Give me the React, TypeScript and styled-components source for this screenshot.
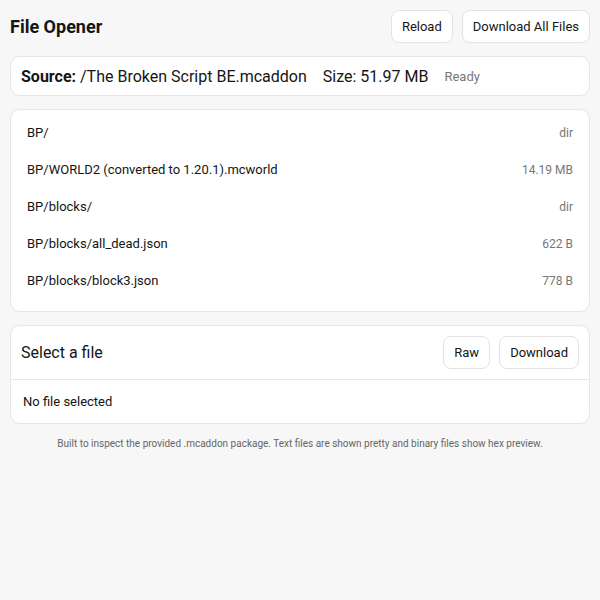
import React from "react";
import styled, { createGlobalStyle } from "styled-components";

interface Entry {
  name: string;
  size: string;
}

const entries: Entry[] = [
  { name: "BP/", size: "dir" },
  { name: "BP/WORLD2 (converted to 1.20.1).mcworld", size: "14.19 MB" },
  { name: "BP/blocks/", size: "dir" },
  { name: "BP/blocks/all_dead.json", size: "622 B" },
  { name: "BP/blocks/block3.json", size: "778 B" },
];

const GlobalStyle = createGlobalStyle`
  body {
    margin: 0;
    background: #f7f7f7;
    font-family: Roboto, "Liberation Sans", sans-serif;
    color: #151515;
  }
`;

const Page = styled.div`
  padding: 10px;
  display: flex;
  flex-direction: column;
  gap: 13px;
`;

const Header = styled.header`
  display: flex;
  align-items: center;
  justify-content: space-between;
  height: 33px;
`;

const Title = styled.h1`
  margin: 0;
  font-size: 18px;
  font-weight: 700;
`;

const Actions = styled.div`
  display: flex;
  gap: 9px;
`;

const Button = styled.button`
  height: 33px;
  padding: 0 10px;
  border: 1px solid #e2e2e2;
  border-radius: 8px;
  background: #fff;
  font-family: inherit;
  font-size: 13px;
  color: #151515;
  cursor: pointer;
`;

const Card = styled.section`
  background: #fff;
  border: 1px solid #e6e6e6;
  border-radius: 10px;
`;

const SourceBar = styled(Card)`
  height: 38px;
  padding: 0 10px;
  display: flex;
  align-items: center;
  gap: 16px;
  font-size: 16px;
`;

const Label = styled.b`
  font-weight: 700;
`;

const Status = styled.span`
  font-size: 13px;
  color: #777;
`;

const FileList = styled(Card)`
  padding: 4px 16px 12px;
`;

const Row = styled.div`
  height: 37px;
  display: flex;
  align-items: center;
  justify-content: space-between;
  font-size: 13px;
`;

const Size = styled.span`
  font-size: 12px;
  color: #777;
`;

const Viewer = styled(Card)``;

const ViewerHead = styled.div`
  height: 53px;
  padding: 0 10px;
  display: flex;
  align-items: center;
  justify-content: space-between;
  border-bottom: 1px solid #e6e6e6;
`;

const ViewerTitle = styled.span`
  font-size: 16px;
`;

const ViewerBody = styled.div`
  height: 43px;
  padding: 0 12px;
  display: flex;
  align-items: center;
  font-size: 13px;
`;

const Footer = styled.p`
  margin: 1px 0 0;
  text-align: center;
  font-size: 10px;
  color: #666;
`;

export default function App() {
  return (
    <>
      <GlobalStyle />
      <Page>
        <Header>
          <Title>File Opener</Title>
          <Actions>
            <Button>Reload</Button>
            <Button>Download All Files</Button>
          </Actions>
        </Header>
        <SourceBar>
          <span>
            <Label>Source:</Label> /The Broken Script BE.mcaddon
          </span>
          <span>Size: 51.97 MB</span>
          <Status>Ready</Status>
        </SourceBar>
        <FileList>
          {entries.map((e) => (
            <Row key={e.name}>
              <span>{e.name}</span>
              <Size>{e.size}</Size>
            </Row>
          ))}
        </FileList>
        <Viewer>
          <ViewerHead>
            <ViewerTitle>Select a file</ViewerTitle>
            <Actions>
              <Button>Raw</Button>
              <Button>Download</Button>
            </Actions>
          </ViewerHead>
          <ViewerBody>No file selected</ViewerBody>
        </Viewer>
        <Footer>
          Built to inspect the provided .mcaddon package. Text files are shown pretty and binary files show hex preview.
        </Footer>
      </Page>
    </>
  );
}
